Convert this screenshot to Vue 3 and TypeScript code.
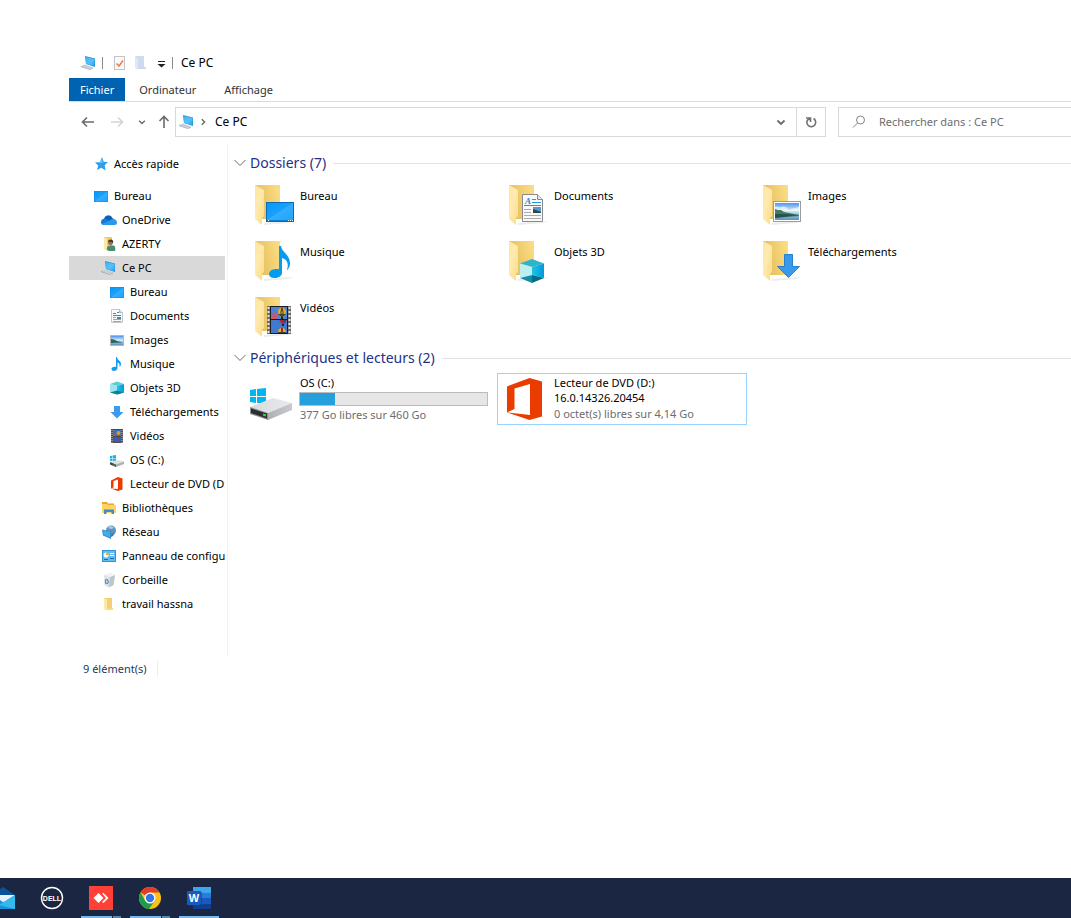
<script setup lang="ts">
import { ref } from 'vue'

interface TreeEntry {
  label: string
  icon: string
  level: number
  spaced?: boolean
}

interface Folder {
  label: string
  overlay: string
}

interface Drive {
  icon: string
  lines: string[]
  used?: number
  free: string
}

interface TaskApp {
  label: string
  icon: string
  running: boolean
  stacked?: boolean
}

const tree: TreeEntry[] = [
  { label: 'Accès rapide', icon: 's-star', level: 0, spaced: true },
  { label: 'Bureau', icon: 's-desktop', level: 0 },
  { label: 'OneDrive', icon: 's-cloud', level: 1 },
  { label: 'AZERTY', icon: 's-user', level: 1 },
  { label: 'Ce PC', icon: 's-pc', level: 1 },
  { label: 'Bureau', icon: 's-desktop', level: 2 },
  { label: 'Documents', icon: 's-doc', level: 2 },
  { label: 'Images', icon: 's-image', level: 2 },
  { label: 'Musique', icon: 's-music', level: 2 },
  { label: 'Objets 3D', icon: 's-cube', level: 2 },
  { label: 'Téléchargements', icon: 's-download', level: 2 },
  { label: 'Vidéos', icon: 's-video', level: 2 },
  { label: 'OS (C:)', icon: 's-drive', level: 2 },
  { label: 'Lecteur de DVD (D:) 16.0.14326.20454', icon: 's-office', level: 2 },
  { label: 'Bibliothèques', icon: 's-library', level: 1 },
  { label: 'Réseau', icon: 's-network', level: 1 },
  { label: 'Panneau de configuration', icon: 's-panel', level: 1 },
  { label: 'Corbeille', icon: 's-bin', level: 1 },
  { label: 'travail hassna', icon: 's-folder', level: 1 },
]

const folders: Folder[] = [
  { label: 'Bureau', overlay: 'o-desktop' },
  { label: 'Documents', overlay: 'o-doc' },
  { label: 'Images', overlay: 'o-image' },
  { label: 'Musique', overlay: 'o-music' },
  { label: 'Objets 3D', overlay: 'o-cube' },
  { label: 'Téléchargements', overlay: 'o-download' },
  { label: 'Vidéos', overlay: 'o-video' },
]

const drives: Drive[] = [
  { icon: 'o-drive', lines: ['OS (C:)'], used: 18.5, free: '377 Go libres sur 460 Go' },
  { icon: 'o-office', lines: ['Lecteur de DVD (D:)', '16.0.14326.20454'], free: '0 octet(s) libres sur 4,14 Go' },
]

const apps: TaskApp[] = [
  { label: 'Courrier', icon: 't-mail', running: false },
  { label: 'Dell', icon: 't-dell', running: false },
  { label: 'AnyDesk', icon: 't-anydesk', running: true, stacked: true },
  { label: 'Chrome', icon: 't-chrome', running: true, stacked: true },
  { label: 'Word', icon: 't-word', running: true },
]

const current = ref(4)
const activeDrive = ref(1)
const query = ref('')
</script>

<template>
  <div class="screen">
    <svg class="defs" width="0" height="0" aria-hidden="true">
      <defs>
        <linearGradient id="g-back" x1="0" y1="0.6" x2="1" y2="0.3">
          <stop offset="0.2" stop-color="#e6c262" /><stop offset="1" stop-color="#fcdc83" />
        </linearGradient>
        <linearGradient id="g-flap" x1="0" y1="0" x2="1" y2="1">
          <stop offset="0" stop-color="#ffe698" /><stop offset="0.4" stop-color="#ffeab0" /><stop offset="1" stop-color="#fbdc80" />
        </linearGradient>
        <linearGradient id="g-blue" x1="0" y1="0" x2="1" y2="1">
          <stop offset="0" stop-color="#0a94fa" /><stop offset="0.5" stop-color="#18a2ff" /><stop offset="0.5" stop-color="#35adff" /><stop offset="1" stop-color="#1ea4ff" />
        </linearGradient>
        <linearGradient id="g-screen" x1="0" y1="0" x2="1" y2="1">
          <stop offset="0" stop-color="#3fb4f5" /><stop offset="0.55" stop-color="#58c1fc" /><stop offset="1" stop-color="#229de8" />
        </linearGradient>
        <linearGradient id="g-sky" x1="0" y1="0" x2="0" y2="1">
          <stop offset="0" stop-color="#4f95e8" /><stop offset="0.45" stop-color="#d5ecfa" /><stop offset="0.6" stop-color="#a9d3e8" /><stop offset="1" stop-color="#5e90bd" />
        </linearGradient>
        <linearGradient id="g-side" x1="0" y1="0" x2="1" y2="0">
          <stop offset="0" stop-color="#21c4e4" /><stop offset="1" stop-color="#0098dc" />
        </linearGradient>
        <linearGradient id="g-top" x1="0" y1="0" x2="1" y2="0">
          <stop offset="0" stop-color="#d9dade" /><stop offset="1" stop-color="#e9eaec" />
        </linearGradient>
        <linearGradient id="g-edge" x1="0" y1="0" x2="1" y2="0">
          <stop offset="0" stop-color="#aeb0b4" /><stop offset="1" stop-color="#c9cacd" />
        </linearGradient>
      </defs>

      <!-- 48px tile pictures -->
      <symbol id="o-folder" viewBox="0 0 48 48">
        <path d="M16 43 L46 41 L40 43 L16 45Z" fill="#ececec" />
        <path d="M7 5H32V39H14Z" fill="url(#g-back)" />
        <path d="M7 5L16 10V36L14 38V45L7 39Z" fill="url(#g-flap)" />
      </symbol>
      <symbol id="o-desktop" viewBox="0 0 48 48">
        <rect x="18" y="22" width="28" height="20" fill="#0a6bb4" />
        <rect x="19" y="23" width="26" height="17" fill="url(#g-blue)" />
        <path d="M19 40.500H45" stroke="#0b7fd1" />
        <path d="M20 40.500H21M40 40.500H41M42 40.500H43M44 40.500H45" stroke="#fff" />
      </symbol>
      <symbol id="o-doc" viewBox="0 0 48 48">
        <path d="M20.500 14.500H35.500L40.500 19.500V41.500H20.500Z" fill="#f9f9f9" stroke="#878b8f" />
        <path d="M35.500 14.500V19.500H40.500" fill="#e4e4e4" stroke="#878b8f" />
        <path d="M30 19.500H34M30 22.500H39M22 25.500H39" stroke="#2c95d6" />
        <path d="M22 29.500H29M22 32.500H29M22 35.500H39M22 38.500H39" stroke="#aaa" />
        <rect x="31" y="27" width="8" height="6" fill="#5d98c9" />
        <path d="M31 29L34 30L39 32V33H31Z" fill="#224e50" />
      </symbol>
      <symbol id="o-image" viewBox="0 0 48 48">
        <rect x="17.500" y="21.500" width="27" height="20" fill="#fff" stroke="#999da1" />
        <rect x="19" y="23" width="24" height="17" fill="url(#g-sky)" />
        <path d="M19 27C22 26 24 28 26 27S31 27 32 29S37 28 43 27V31H19Z" fill="#fff" opacity="0.6" />
        <path d="M19 29L22 30L25 30L28 32L33 33L43 35V36L19 38Z" fill="#477b61" />
        <path d="M19 34L30 34L43 35L19 38Z" fill="#25544e" />
      </symbol>
      <symbol id="o-music" viewBox="0 0 48 48">
        <path d="M31 10H33C34 17 42 18 42 28Q42 31 39.500 34L39 33.500C41 28 39 23 34 22V37C34 40 30 42 26.500 42C23 42 21 40.500 21 38C21 34.500 25 32.500 31 33Z" fill="#059bf3" />
      </symbol>
      <symbol id="o-cube" viewBox="0 0 48 48">
        <path d="M30 23L42 27.500L30 31L18 27.500Z" fill="#2eb5cd" />
        <path d="M18 27.500L30 31V39L18 42Z" fill="#bceef3" />
        <path d="M30 31L42 27.500V42L30 39Z" fill="url(#g-side)" />
        <path d="M18 42L30 39V47Z" fill="#128fa5" />
        <path d="M42 42L30 39V47Z" fill="#006d87" />
      </symbol>
      <symbol id="o-download" viewBox="0 0 48 48">
        <path d="M28.500 18.500H36.500V30.500H43.500L32.500 41.500L21.500 30.500H28.500Z" fill="#379aed" stroke="#2580cd" />
      </symbol>
      <symbol id="o-video" viewBox="0 0 48 48">
        <rect x="19" y="14" width="24" height="28" fill="#6b6b6b" />
        <path d="M20.500 15V42M41.500 15V42" stroke="#e6e6e6" stroke-width="2" stroke-dasharray="2 2" />
        <rect x="22" y="14" width="18" height="28" fill="#1c1c1c" />
        <rect x="23" y="15" width="16" height="12" fill="#4a86d8" />
        <rect x="23" y="28" width="16" height="13" fill="#4379cc" />
        <path d="M23 23L26 20L29 22L30 27H23Z" fill="#b55d83" />
        <path d="M24 25H28V27H24Z" fill="#d6584f" />
        <path d="M30 20A4 4 0 0 1 38 20Q38 23 35 25H33Q30 23 30 20Z" fill="#e8ad21" />
        <path d="M34 16Q32 20 33.500 25M34 16Q36 20 34.500 25" fill="none" stroke="#47331f" />
        <path d="M30 22H38L36 24H32Z" fill="#37492f" /><path d="M33 25H35V27H33Z" fill="#222" />
        <path d="M31 28H39L36 32H34Z" fill="#c42824" /><path d="M33 28H34L35 32ZM36 28H38L36 32Z" fill="#273b91" /><path d="M34 32H36V34H34Z" fill="#222" />
        <path d="M30 41Q30 36 34 36T38 41Z" fill="#e8ad21" /><path d="M33 36H35V41H33Z" fill="#b52420" /><path d="M30 40H38V41H30Z" fill="#37492f" />
      </symbol>
      <symbol id="o-drive" viewBox="0 0 48 48">
        <path d="M2 15L8 14V21H2ZM9 14L18 13V21H9ZM2 22H8V28L2 27ZM9 22H18V29L9 28Z" fill="#00b6ee" />
        <path d="M2 32L25 23L44 28L20 38Z" fill="url(#g-top)" />
        <path d="M20 38L44 28V35L20 45Z" fill="url(#g-edge)" />
        <path d="M2 32L20 38V45L2 39Z" fill="#8b8d8f" />
        <path d="M3 33.500L19 38.500V43.500L3 38Z" fill="#2b2d2e" />
        <path d="M15 39.500L18 40.500" stroke="#40d14b" stroke-width="2" />
      </symbol>
      <symbol id="o-office" viewBox="0 0 48 48">
        <path d="M5 11.500L27.500 3L40 6.500V41.500L27.500 45L5 37.500L28 40V9L12.500 13.500V34L5 37.500Z" fill="#eb3c00" />
      </symbol>

      <!-- 16px pictures -->
      <symbol id="s-star" viewBox="0 0 16 16">
        <path d="M9 1L10.700 5.700L15 6L11.700 9.300L12.500 14.500L8.300 11.700L4 14L5.200 9.500L2 6.500L7 5.900Z" fill="#2f9fec" />
        <path d="M9 2.500L9.500 7L4 6.800L7 6.300Z" fill="#70c5fa" />
      </symbol>
      <symbol id="s-desktop" viewBox="0 0 16 16">
        <rect x="1" y="3" width="14" height="11" fill="#0f8ae4" /><rect x="1.500" y="3.500" width="13" height="10" fill="url(#g-blue)" />
      </symbol>
      <symbol id="s-cloud" viewBox="0 0 16 16">
        <path d="M3 7A4.500 4.500 0 0 1 11.500 6L13 7.500L8 11L1 10Z" fill="#0a5fb8" />
        <path d="M0 10Q0 7 3.500 6.500Q6 6.500 9 9L5 13H3Q0 13 0 10Z" fill="#157bd6" />
        <path d="M8 9Q12 5.500 14 7.500Q16 8.500 16 10.500Q16 13 13.500 13H3Q1.500 13 1 12Z" fill="#299ae9" />
      </symbol>
      <symbol id="s-user" viewBox="0 0 16 16">
        <path d="M3 1H11V13H5Z" fill="#edcb6b" /><path d="M3 1L6 3V15L3 13Z" fill="#ffe8a3" />
        <circle cx="9.500" cy="6.500" r="2.500" fill="#9b6f51" /><path d="M7 6Q7 3 10 3.500Q13 4 12 7Q10 5 7 6Z" fill="#45382e" />
        <path d="M6 14Q5 10 9 9.500L13 9.500Q15 11 14 15H8Z" fill="#458e74" />
      </symbol>
      <symbol id="s-pc" viewBox="0 0 16 16">
        <path d="M4 1L14 3.500V12L5 9Z" fill="#2d91ce" /><path d="M4.500 2L13.500 4V11.500L5 8.500Z" fill="url(#g-screen)" />
        <path d="M0 11L4 9.500L12 12.500L9 14.500Z" fill="#c6ced4" /><path d="M0 11L9 14.500L12 12.500V13.500L9 15L0 12Z" fill="#9ca9b2" />
      </symbol>
      <symbol id="s-doc" viewBox="0 0 16 16">
        <path d="M2.500 1.500H10.500L13.500 4.500V14.500H2.500Z" fill="#fafafa" stroke="#c4c8cb" />
        <path d="M10.500 1.500V4.500H13.500" fill="#e4e4e4" stroke="#b3b7bb" />
        <path d="M4 5.500H7M8 4.500H10M4 7.500H12" stroke="#2b8fd0" /><path d="M8 9H12V11H8Z" fill="#49859c" /><path d="M4 9.500H7M4 11.500H12M4 13.500H12" stroke="#7eaed3" />
      </symbol>
      <symbol id="s-image" viewBox="0 0 16 16">
        <rect x="1.500" y="3.500" width="13" height="10" fill="#fff" stroke="#b3b7bb" /><rect x="2" y="4" width="12" height="9" fill="url(#g-sky)" />
        <path d="M2 7L5 7.500L8 9L14 10.500L2 11Z" fill="#2e6360" />
      </symbol>
      <symbol id="s-music" viewBox="0 0 16 16">
        <path d="M7 1H8C8 4 12 5 12 8Q12 10 10.500 11C11 8 10 7 8.500 6.500V12C8.500 14 6.500 15 5 15C3.500 15 2.500 14 2.500 13C2.500 11.500 5 10.500 7 11Z" fill="#119bf1" />
      </symbol>
      <symbol id="s-cube" viewBox="0 0 16 16">
        <path d="M1 4L8 1.500L15 4L8 6Z" fill="#5ccbdc" /><path d="M1 4L8 6V14.500L1 12.500Z" fill="#9fe4ec" /><path d="M8 6L15 4V12.500L8 14.500Z" fill="url(#g-side)" />
        <path d="M1 12.500L8 10.500V14.500ZM15 12.500L8 10.500V14.500Z" fill="#0b829b" />
      </symbol>
      <symbol id="s-download" viewBox="0 0 16 16">
        <path d="M5 2H11V8H14.500L8 14.500L1.500 8H5Z" fill="#3a9aec" />
      </symbol>
      <symbol id="s-video" viewBox="0 0 16 16">
        <rect x="2" y="1" width="12" height="14" fill="#4c4c4c" /><path d="M3 2V15M13 2V15" stroke="#c9c9c9" stroke-dasharray="1 1" />
        <rect x="4" y="2" width="8" height="6" fill="#3d6fbf" /><rect x="4" y="9" width="8" height="5" fill="#355fae" />
        <circle cx="9.500" cy="5" r="2" fill="#d99c2b" /><path d="M8 9H12L10 11Z" fill="#b32f2a" /><path d="M4 7L6 5L8 8H4Z" fill="#a1506f" />
      </symbol>
      <symbol id="s-drive" viewBox="0 0 16 16">
        <path d="M1 4L3 3.700V6H1ZM3.500 3.600L7 3V6H3.500ZM1 6.500H3V9L1 8.700ZM3.500 6.500H7V9.500L3.500 9.100Z" fill="#15b5ee" />
        <path d="M1 10L8 8L15 9.500L7 12.500Z" fill="#dfe0e2" /><path d="M7 12.500L15 9.500V12L7 15Z" fill="#adafb2" /><path d="M1 10L7 12.500V15L1 12.500Z" fill="#424446" /><path d="M4.500 12.700L6 13.300" stroke="#3fbf4a" />
      </symbol>
      <symbol id="s-office" viewBox="0 0 16 16">
        <path d="M2 4.500L9 1L13.500 2.500V13.500L9 15L2 12.500L9 13V3.500L4.500 5V11.500L2 12.500Z" fill="#eb3c00" />
      </symbol>
      <symbol id="s-library" viewBox="0 0 16 16">
        <path d="M1 2H6L7 3.500H13V6H1Z" fill="#e9a92e" /><path d="M1 4H6L7 5H15V13H1Z" fill="#ffd364" /><path d="M3 14V9.500H13V14H10.500V12H5.500V14Z" fill="#3d8fce" />
      </symbol>
      <symbol id="s-network" viewBox="0 0 16 16">
        <circle cx="10" cy="6.500" r="5" fill="#5f95bd" /><path d="M7 2.500Q10 1 13 3.500L11 5L8 4.500Z" fill="#a6cbe0" />
        <path d="M1 5.500L10 7.500V15L2 11.500Z" fill="#2f8fd2" /><path d="M2 6.500L9 8V13.500L3 11Z" fill="#45abeb" /><path d="M10 10L14 8.500L12 12L10 13Z" fill="#3c7fae" />
      </symbol>
      <symbol id="s-panel" viewBox="0 0 16 16">
        <rect x="1" y="2" width="14" height="12" fill="#2d94db" /><rect x="2" y="3" width="12" height="10" fill="#62bdf2" />
        <circle cx="5" cy="7" r="2.500" fill="#fff" /><path d="M5 7V4.500A2.500 2.500 0 0 1 7.500 7Z" fill="#eaa92f" /><path d="M9 5.500H13M9 7.500H13" stroke="#fff" /><path d="M3 11.500H7M9 10.500H13" stroke="#176bb3" />
      </symbol>
      <symbol id="s-bin" viewBox="0 0 16 16">
        <path d="M3 3L9 1L14 3L12.500 13L7 15.500L3.500 13Z" fill="#dfe3e6" /><path d="M9 5L14 3L12.500 13L8 15.500Z" fill="#bec4c9" /><path d="M3 3L9 1L14 3L9 5Z" fill="#f1f3f4" />
        <path d="M4.500 8L6 7.500L7.500 9.500L6.500 11.500L4.500 11Z" fill="none" stroke="#4b93cf" stroke-width="1.200" />
      </symbol>
      <symbol id="s-folder" viewBox="0 0 16 16">
        <path d="M3 2H11V13H5Z" fill="#f3d071" /><path d="M3 2L6 3.500V15L3 13Z" fill="#ffe9a6" /><path d="M11 12H12V14H6V12Z" fill="#f8da85" />
      </symbol>
      <symbol id="s-check" viewBox="0 0 16 16">
        <rect x="3.500" y="1.500" width="10" height="13" fill="#fafafa" stroke="#c4c4c4" /><path d="M5.500 8.500L8 11L12 5.500" fill="none" stroke="#ee7d48" stroke-width="1.500" />
      </symbol>
      <symbol id="s-new" viewBox="0 0 16 16">
        <path d="M3 1H12V12H14V14H5Z" fill="#cddbed" /><path d="M3 1L6 4V15L3 13Z" fill="#dfe9f5" />
      </symbol>
      <symbol id="s-menu" viewBox="0 0 16 16">
        <path d="M5 6.500H12" stroke="#222" /><path d="M4.500 9H12.500L8.500 12.500Z" fill="#222" />
      </symbol>
      <symbol id="s-arrow" viewBox="0 0 16 16">
        <path d="M14 8H2.500M7 3.500L2.500 8L7 12.500" fill="none" stroke="currentColor" stroke-width="1.600" />
      </symbol>
      <symbol id="s-caret" viewBox="0 0 10 10">
        <path d="M1.500 3.500L5 7L8.500 3.500" fill="none" stroke="currentColor" stroke-width="1.800" />
      </symbol>
      <symbol id="s-thin" viewBox="0 0 12 12">
        <path d="M0.500 3L6 8.500L11.500 3" fill="none" stroke="#6b6b6b" />
      </symbol>
      <symbol id="s-refresh" viewBox="0 0 16 16">
        <path d="M10.500 4.500A4.400 4.400 0 1 1 4.500 6L7 4.500M3 4H7.500V8" fill="none" stroke="#717171" stroke-width="1.600" />
      </symbol>
      <symbol id="s-search" viewBox="0 0 16 16">
        <circle cx="9.500" cy="6" r="4" fill="none" stroke="#858585" /><path d="M6.500 9L2 13.500" stroke="#858585" />
      </symbol>

      <!-- 24px taskbar pictures -->
      <symbol id="t-mail" viewBox="0 0 24 24">
        <path d="M0 9L12 1L24 9V13H0Z" fill="#0a5299" /><path d="M2 9H24L12 17Z" fill="#e8f2fa" /><path d="M0 9L24 23H0Z" fill="#1594dc" /><path d="M24 9V23H1Z" fill="#35b7ef" /><path d="M8 19L24 23H0Z" fill="#1a93dd" />
      </symbol>
      <symbol id="t-dell" viewBox="0 0 24 24">
        <circle cx="12" cy="12" r="10.500" fill="none" stroke="#fff" stroke-width="1.400" />
      </symbol>
      <symbol id="t-anydesk" viewBox="0 0 24 24">
        <rect width="24" height="24" fill="#ff4036" /><path d="M4.500 12L9.500 7L14.500 12L9.500 17Z" fill="#fff" /><path d="M13 7.500L14.500 7L19.500 12L14.500 17L13 16L17 12Z" fill="#fff" />
      </symbol>
      <symbol id="t-chrome" viewBox="0 0 24 24">
        <circle cx="12" cy="12" r="11" fill="#fbc116" />
        <path d="M12 12L2.500 6.500A11 11 0 0 1 21.500 6.500H12Z" fill="#e33b2e" />
        <path d="M2.500 6.500A11 11 0 0 0 11 23L16.800 14.700L12 12L7.200 14.700Z" fill="#209b4b" />
        <circle cx="12" cy="12" r="5.500" fill="#fff" /><circle cx="12" cy="12" r="4.200" fill="#3475e6" />
      </symbol>
      <symbol id="t-word" viewBox="0 0 24 24">
        <rect x="6" y="1" width="18" height="6" fill="#41a5ee" /><rect x="6" y="7" width="18" height="5" fill="#2b7cd3" /><rect x="6" y="12" width="18" height="6" fill="#185abd" /><rect x="6" y="18" width="18" height="5" fill="#103f91" />
        <rect x="1" y="6" width="14" height="14" fill="#123a78" opacity="0.5" /><rect x="0" y="5" width="14" height="14" rx="1" fill="#185abd" />
      </symbol>
    </svg>

    <main class="explorer">
      <header class="titlebar">
        <svg class="i16"><use href="#s-pc" /></svg>
        <span class="rule"></span>
        <button class="quick" aria-label="Propriétés"><svg class="i16"><use href="#s-check" /></svg></button>
        <button class="quick" aria-label="Nouveau dossier"><svg class="i16"><use href="#s-new" /></svg></button>
        <button class="quick" aria-label="Personnaliser"><svg class="i16"><use href="#s-menu" /></svg></button>
        <span class="rule"></span>
        <h1 class="title">Ce PC</h1>
      </header>

      <nav class="tabs" aria-label="Ruban">
        <button class="tab file">Fichier</button>
        <button class="tab">Ordinateur</button>
        <button class="tab">Affichage</button>
      </nav>

      <div class="navbar">
        <div class="history">
          <button aria-label="Précédent"><svg class="i16"><use href="#s-arrow" /></svg></button>
          <button class="off" aria-label="Suivant" disabled><svg class="i16 flip"><use href="#s-arrow" /></svg></button>
          <button aria-label="Récents"><svg class="i8"><use href="#s-caret" /></svg></button>
          <button aria-label="Dossier parent"><svg class="i16 up"><use href="#s-arrow" /></svg></button>
        </div>
        <div class="address">
          <svg class="i16"><use href="#s-pc" /></svg>
          <svg class="i8 side"><use href="#s-caret" /></svg>
          <button class="crumb">Ce PC</button>
          <button class="drop" aria-label="Emplacements précédents"><svg class="i10"><use href="#s-caret" /></svg></button>
          <button class="refresh" aria-label="Actualiser"><svg class="i16"><use href="#s-refresh" /></svg></button>
        </div>
        <label class="search">
          <svg class="i16"><use href="#s-search" /></svg>
          <input v-model="query" type="text" placeholder="Rechercher dans : Ce PC" aria-label="Rechercher dans : Ce PC" />
        </label>
      </div>

      <div class="body">
        <nav class="pane" aria-label="Dossiers">
          <ul class="tree">
            <li v-for="(entry, i) in tree" :key="i" :class="{ spaced: entry.spaced }">
              <button class="node" :class="['level' + entry.level, { current: i === current }]" @click="current = i">
                <svg class="i16"><use :href="'#' + entry.icon" /></svg>
                <span>{{ entry.label }}</span>
              </button>
            </li>
          </ul>
        </nav>

        <div class="content">
          <section class="group">
            <h2 class="heading"><svg class="i12"><use href="#s-thin" /></svg><span>Dossiers (7)</span></h2>
            <div class="tiles">
              <button v-for="folder in folders" :key="folder.label" class="tile">
                <svg class="i48">
                  <use href="#o-folder" /><use :href="'#' + folder.overlay" />
                  <text v-if="folder.overlay === 'o-doc'" class="letter" x="23" y="24">A</text>
                </svg>
                <span class="caption single">{{ folder.label }}</span>
              </button>
            </div>
          </section>

          <section class="group">
            <h2 class="heading"><svg class="i12"><use href="#s-thin" /></svg><span>Périphériques et lecteurs (2)</span></h2>
            <div class="tiles">
              <button
                v-for="(drive, i) in drives"
                :key="drive.icon"
                class="tile"
                :class="{ active: i === activeDrive }"
                @click="activeDrive = i"
              >
                <svg class="i48"><use :href="'#' + drive.icon" /></svg>
                <span class="caption">
                  <span v-for="line in drive.lines" :key="line">{{ line }}</span>
                  <span v-if="drive.used" class="gauge"><span class="fill" :style="{ width: drive.used + '%' }"></span></span>
                  <span class="free">{{ drive.free }}</span>
                </span>
              </button>
            </div>
          </section>
        </div>
      </div>

      <footer class="status"><span>9 élément(s)</span></footer>
    </main>

    <footer class="taskbar">
      <button v-for="app in apps" :key="app.label" class="app" :class="{ running: app.running, stacked: app.stacked }" :aria-label="app.label">
        <svg class="i24">
          <use :href="'#' + app.icon" />
          <text v-if="app.icon === 't-dell'" class="mark dell" x="12" y="15">DELL</text>
          <text v-if="app.icon === 't-word'" class="mark word" x="7" y="16">W</text>
        </svg>
      </button>
    </footer>
  </div>
</template>

<style>
body {
  margin: 0;
  background: #fff;
}
</style>

<style scoped>
.screen {
  display: flex;
  flex-direction: column;
  min-height: 100vh;
  overflow: hidden;
  background: #fff;
  color: #000;
  font: 11px/16px "Noto Sans", "Open Sans", sans-serif;
}
.defs { position: absolute; }
button {
  margin: 0;
  padding: 0;
  border: 0;
  background: none;
  color: inherit;
  font: inherit;
  text-align: left;
}
svg { display: block; flex: none; }
.i8 { width: 8px; height: 8px; }
.i10 { width: 10px; height: 10px; }
.i12 { width: 12px; height: 12px; }
.i16 { width: 16px; height: 16px; }
.i24 { width: 24px; height: 24px; }
.i48 { width: 48px; height: 48px; }
.letter {
  fill: #1b8ad0;
  font: italic 700 9px "Liberation Serif", serif;
}
.mark {
  fill: #fff;
  font-family: "Liberation Sans", sans-serif;
  font-weight: 700;
  text-anchor: middle;
}
.dell { font-size: 7px; }
.word { font-size: 11px; }

.explorer {
  display: flex;
  flex-direction: column;
  padding: 51px 0 0 69px;
}
.titlebar {
  display: flex;
  align-items: center;
  height: 24px;
  padding-left: 12px;
  margin-bottom: 3px;
}
.rule {
  width: 1px;
  height: 12px;
  margin: 0 8px 0 5px;
  background: #8a8a8a;
}
.quick { margin-right: 5px; }
.quick + .rule { margin: 0 8px 0 0; }
.quick:nth-of-type(3) { margin-right: 3px; }
.title {
  margin: 0;
  font-size: 12px;
  font-weight: 400;
}

.tabs {
  display: flex;
  height: 23px;
  border-bottom: 1px solid #dadbdc;
}
.tab {
  padding: 0 14px;
  color: #333;
}
.tab.file {
  padding: 0 11px;
  background: #0063b1;
  color: #fff;
}

.navbar {
  display: flex;
  height: 30px;
  margin-top: 5px;
}
.history {
  display: flex;
  align-items: center;
  box-sizing: border-box;
  width: 106px;
  padding-left: 11px;
  gap: 13px;
  color: #6b6b6b;
}
.history .off { color: #d4d4d4; }
.history button:last-child { margin-left: -3px; }
.flip { transform: rotate(180deg); }
.up { transform: rotate(90deg); }
.address {
  display: flex;
  flex: 1;
  align-items: center;
  box-sizing: border-box;
  padding-left: 3px;
  border: 1px solid #d9d9d9;
  color: #6b6b6b;
}
.side {
  margin: 0 8px 0 4px;
  transform: rotate(-90deg);
}
.crumb {
  flex: 1;
  color: #000;
  font-size: 12px;
}
.drop { padding: 0 10px 0 0; }
.refresh {
  display: flex;
  align-items: center;
  justify-content: center;
  width: 29px;
  height: 28px;
  border-left: 1px solid #d9d9d9;
}
.search {
  display: flex;
  align-items: center;
  box-sizing: border-box;
  width: 233px;
  margin-left: 12px;
  padding-left: 12px;
  gap: 12px;
  border: 1px solid #d9d9d9;
  border-right: 0;
}
.search input {
  flex: 1;
  min-width: 0;
  padding: 0;
  border: 0;
  outline: 0;
  background: none;
  font: inherit;
}
.search input::placeholder { color: #6d6d6d; opacity: 1; }

.body {
  display: flex;
  margin-top: 8px;
}
.pane {
  box-sizing: border-box;
  width: 159px;
  padding: 7px 2px 40px 0;
  border-right: 1px solid #f2f2f2;
}
.tree {
  margin: 0;
  padding: 0;
  list-style: none;
}
.spaced { margin-bottom: 8px; }
.node {
  display: flex;
  align-items: center;
  width: 100%;
  height: 24px;
  gap: 5px;
  overflow: hidden;
  white-space: nowrap;
}
.level0 { padding-left: 24px; }
.level1 { padding-left: 32px; }
.level2 { padding-left: 40px; }
.current { background: #d9d9d9; }

.content {
  flex: 1;
  min-width: 0;
  padding: 6px 0 0 6px;
}
.group { margin-bottom: 4px; }
.heading {
  display: flex;
  align-items: center;
  height: 24px;
  margin: 0 0 3px;
  gap: 4px;
  color: #1e3287;
  font-size: 14px;
  font-weight: 400;
}
.heading::after {
  content: "";
  flex: 1;
  height: 1px;
  margin-left: 3px;
  background: #e2e2e2;
}
.tiles {
  display: grid;
  grid-template-columns: repeat(auto-fill, 250px);
  gap: 4px;
  padding-left: 9px;
}
.tile {
  display: flex;
  box-sizing: border-box;
  height: 52px;
  padding: 1px 4px;
  gap: 4px;
  border: 1px solid transparent;
}
.tile.active { border-color: #99d1ff; }
.caption {
  display: flex;
  flex: 1;
  flex-direction: column;
  line-height: 15px;
}
.caption.single { padding-top: 8px; }
.gauge {
  box-sizing: border-box;
  width: 189px;
  height: 14px;
  margin: 2px 0 0 -1px;
  border: 1px solid #bcbcbc;
  background: #e6e6e6;
}
.fill {
  display: block;
  height: 100%;
  background: #26a0da;
}
.free { color: #6d6d6d; line-height: 17px; }

.status {
  display: flex;
  padding: 5px 14px;
  color: #1e395b;
}
.status span {
  padding-right: 10px;
  border-right: 1px solid #ededed;
}

.taskbar {
  display: flex;
  height: 40px;
  margin-top: auto;
  padding-left: 32px;
  gap: 9px;
  background: #1a2642;
}
.app {
  display: flex;
  align-items: center;
  justify-content: center;
  box-sizing: border-box;
  width: 40px;
  height: 40px;
}
.app:first-child { margin-left: -49px; }
.running { background: linear-gradient(#76b9ed, #76b9ed) 0 100% / 100% 2px no-repeat; }
.running.stacked { background-image: linear-gradient(90deg, #76b9ed 31px, #1a2642 31px, #1a2642 32px, #5589b2 32px); }
</style>
